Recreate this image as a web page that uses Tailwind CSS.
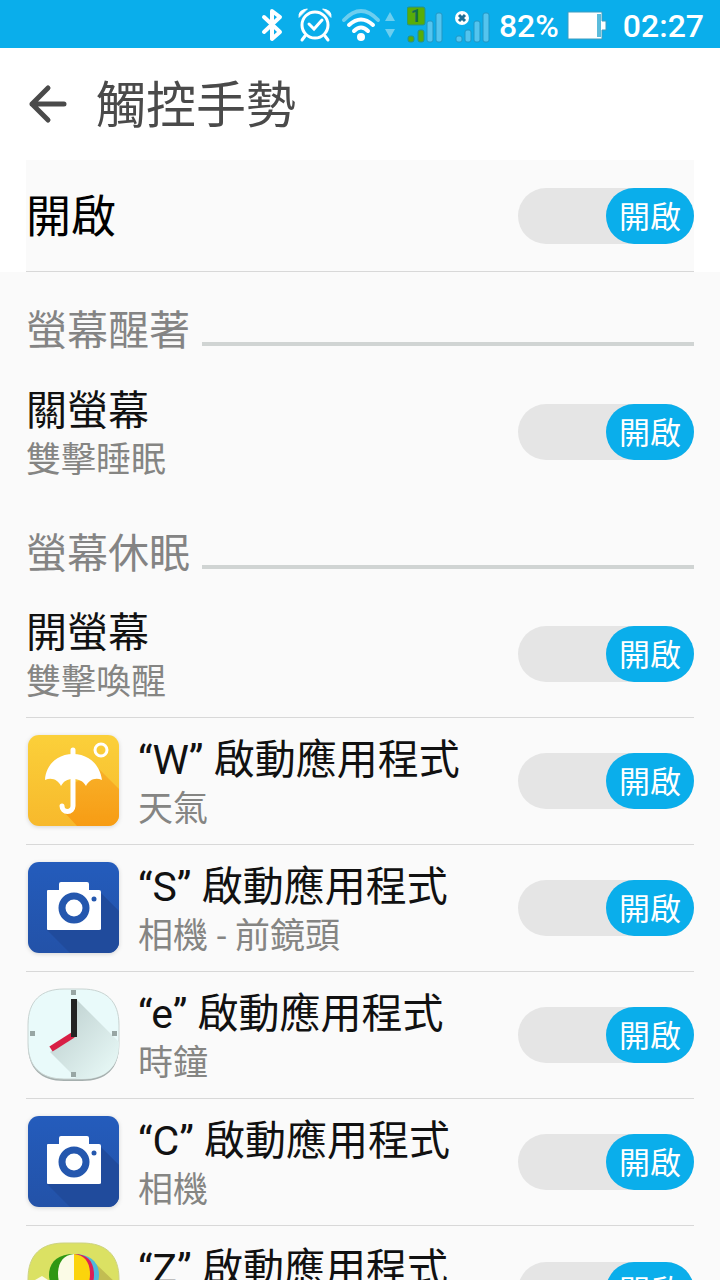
<!DOCTYPE html>
<html lang="zh-Hant">
  <head>
    <meta charset="UTF-8" />
    <meta name="viewport" content="width=device-width, initial-scale=1.0" />
    <title>觸控手勢</title>
    <script src="https://cdn.jsdelivr.net/npm/@tailwindcss/browser@4"></script>
  </head>

  <body
    class="h-screen overflow-hidden bg-[#fafafa] font-['Roboto','Noto_Sans_CJK_TC',sans-serif] text-[#111]"
  >
    <!-- ============ STATUS BAR ============ -->
    <div class="flex h-12 items-center justify-end bg-[#0aaeeb] pr-4 text-white">
      <!-- bluetooth -->
      <svg class="h-12 w-6" viewBox="0 0 24 48" fill="none" stroke="currentColor" stroke-width="4" stroke-linejoin="round" stroke-linecap="round" aria-hidden="true">
        <path d="M3 17l16 15-8 7V11l8 6L3 32" />
      </svg>
      <!-- alarm -->
      <svg class="ml-3 h-12 w-9" viewBox="0 0 36 48" fill="none" stroke="currentColor" stroke-width="3" stroke-linecap="round" aria-hidden="true">
        <circle cx="18" cy="25" r="13" />
        <path d="M12 24l5 5 8-9M8 36l-3 4M28 36l3 4" />
        <path d="M2 17q-1-7 8-8zM34 17q1-7-8-8z" fill="currentColor" stroke="currentColor" stroke-width="1" />
      </svg>
      <!-- wifi -->
      <svg class="ml-2 h-12 w-14" viewBox="0 0 56 48" fill="none" aria-hidden="true">
        <path d="M3 20q17-18 34 0" stroke="#6dceef" stroke-width="4" stroke-linecap="round" />
        <path d="M8 25q12-11 24 0M13 31q7-7 14 0" stroke="white" stroke-width="4" stroke-linecap="round" />
        <circle cx="20" cy="37" r="4" fill="white" />
        <path d="M44 21l5-9 5 9zM44 29l5 9 5-9z" fill="#6dceef" />
      </svg>
      <!-- SIM 1 signal -->
      <svg class="ml-[10px] h-12 w-9" viewBox="0 0 36 48" aria-hidden="true">
        <rect x="0" y="7" width="18" height="18" rx="2" fill="#58ad08" stroke="#258f93" />
        <text x="9" y="22" text-anchor="middle" font-size="18" font-weight="700" fill="#126c50">1</text>
        <rect x="1" y="36" width="6" height="6" rx="2" fill="#58ad08" stroke="#258f93" />
        <rect x="11" y="30" width="6" height="12" rx="2" fill="#58ad08" stroke="#258f93" />
        <rect x="20" y="21" width="6" height="21" rx="2" fill="#54c4ee" stroke="#2196c4" />
        <rect x="29" y="13" width="6" height="29" rx="2" fill="#54c4ee" stroke="#2196c4" />
      </svg>
      <!-- SIM 2 signal -->
      <svg class="ml-3 h-12 w-9" viewBox="0 0 36 48" aria-hidden="true">
        <g fill="#54c4ee" stroke="#2196c4">
          <rect x="1" y="36" width="6" height="6" rx="2" />
          <rect x="10" y="30" width="6" height="12" rx="2" />
          <rect x="19" y="21" width="6" height="21" rx="2" />
          <rect x="28" y="13" width="6" height="29" rx="2" />
        </g>
        <circle cx="7" cy="18" r="7" fill="white" />
        <path d="M4 15l6 6M10 15l-6 6" stroke="#1d6f96" stroke-width="3" />
      </svg>
      <span class="ml-2 pt-1 text-[32px] leading-12 font-medium">82%</span>
      <!-- battery -->
      <svg class="ml-2 h-12 w-10" viewBox="0 0 40 48" aria-hidden="true">
        <path d="M1 12h34v9h4v9h-4v9H1z" fill="white" stroke="#3c9cc0" />
        <rect x="30" y="14" width="4" height="23" fill="#5bbcdc" />
      </svg>
      <time class="ml-4 pt-1 text-[32px] leading-12 font-medium">02:27</time>
    </div>

    <!-- ============ HEADER ============ -->
    <header class="flex h-28 items-center gap-7 bg-white px-[26px] text-[#4a4a4a]">
      <button type="button" aria-label="返回">
        <svg class="h-12 w-[42px]" viewBox="0 0 42 48" fill="none" stroke="currentColor" stroke-width="5" stroke-linecap="round" stroke-linejoin="round">
          <path d="M38 24H6M22 8L6 24l16 16" />
        </svg>
      </button>
      <h1 class="pt-1 text-[50px] leading-none">觸控手勢</h1>
    </header>

    <!-- master switch -->
    <div class="bg-white px-[26px]">
      <div class="flex h-28 items-center justify-between border-b border-[#d8d8d8] bg-[#fafafa]">
        <span class="pt-1 text-[45px] leading-none text-black">開啟</span>
        <label class="relative h-14 w-44 shrink-0">
          <input type="checkbox" role="switch" checked aria-label="開啟觸控手勢" class="block h-14 w-44 appearance-none rounded-full bg-[#e5e5e5]" />
          <span class="absolute inset-y-0 right-0 w-22 rounded-full bg-[#0aaeeb] text-center text-[31px] leading-15 text-white">開啟</span>
        </label>
      </div>
    </div>

    <main class="px-[26px]">
      <!-- ============ SCREEN AWAKE ============ -->
      <h2 class="flex h-24 items-end gap-3 pb-4 text-[41px] leading-none text-[#848484]">
        <span>螢幕醒著</span>
        <span class="mb-[6px] h-1 flex-1 bg-[#d0d4d3]"></span>
      </h2>

      <div class="flex h-[127px] items-center justify-between">
        <div class="pt-2">
          <h3 class="text-[41px] leading-[50px]">關螢幕</h3>
          <p class="text-[35px] leading-[50px] text-[#858583]">雙擊睡眠</p>
        </div>
        <label class="relative h-14 w-44 shrink-0">
          <input type="checkbox" role="switch" checked aria-label="關螢幕" class="block h-14 w-44 appearance-none rounded-full bg-[#e5e5e5]" />
          <span class="absolute inset-y-0 right-0 w-22 rounded-full bg-[#0aaeeb] text-center text-[31px] leading-15 text-white">開啟</span>
        </label>
      </div>

      <!-- ============ SCREEN ASLEEP ============ -->
      <h2 class="flex h-24 items-end gap-3 pb-4 text-[41px] leading-none text-[#848484]">
        <span>螢幕休眠</span>
        <span class="mb-[6px] h-1 flex-1 bg-[#d0d4d3]"></span>
      </h2>

      <ul class="divide-y divide-[#d8d8d8]">
        <li class="flex h-[127px] items-center justify-between">
          <div class="pt-2">
            <h3 class="text-[41px] leading-[50px]">開螢幕</h3>
            <p class="text-[35px] leading-[50px] text-[#858583]">雙擊喚醒</p>
          </div>
          <label class="relative h-14 w-44 shrink-0">
            <input type="checkbox" role="switch" checked aria-label="開螢幕" class="block h-14 w-44 appearance-none rounded-full bg-[#e5e5e5]" />
            <span class="absolute inset-y-0 right-0 w-22 rounded-full bg-[#0aaeeb] text-center text-[31px] leading-15 text-white">開啟</span>
          </label>
        </li>

        <!-- W: weather -->
        <li class="flex h-[127px] items-center gap-4">
          <svg class="size-24 shrink-0 drop-shadow-sm" viewBox="0 0 96 96" aria-hidden="true">
            <defs>
              <linearGradient id="sun" x1="0" y1="0" x2="0" y2="1">
                <stop offset="0" stop-color="#fbd03a" />
                <stop offset="1" stop-color="#f7b92c" />
              </linearGradient>
              <linearGradient id="sunShade" x1="0" y1="0" x2="0" y2="1">
                <stop offset="0" stop-color="#f8b028" />
                <stop offset="1" stop-color="#f79c14" />
              </linearGradient>
            </defs>
            <rect x="2" y="2" width="91" height="91" rx="11" fill="url(#sun)" />
            <path d="M73 36l20 20v26a11 11 0 0 1-11 11H51L39 80l8-2V50l13-5z" fill="url(#sunShade)" />
            <path d="M19 47C20 31 32 21 47 21s27 10 29 26c-7-3-13 0-16 6-3-5-7-7-13-7s-9 2-12 7c-3-6-9-9-16-6z" fill="white" />
            <path d="M47 24v-7M47 46v27a5.500 5.500 0 0 1-11 0" fill="none" stroke="white" stroke-width="5" stroke-linecap="round" />
            <circle cx="75" cy="17" r="6" fill="none" stroke="white" stroke-width="3" />
          </svg>
          <div class="flex-1 pt-2">
            <h3 class="text-[41px] leading-[50px]">“W” 啟動應用程式</h3>
            <p class="text-[35px] leading-[50px] text-[#858583]">天氣</p>
          </div>
          <label class="relative h-14 w-44 shrink-0">
            <input type="checkbox" role="switch" checked aria-label="W 啟動應用程式" class="block h-14 w-44 appearance-none rounded-full bg-[#e5e5e5]" />
            <span class="absolute inset-y-0 right-0 w-22 rounded-full bg-[#0aaeeb] text-center text-[31px] leading-15 text-white">開啟</span>
          </label>
        </li>

        <!-- S: front camera -->
        <li class="flex h-[127px] items-center gap-4">
          <svg class="size-24 shrink-0 drop-shadow-sm" viewBox="0 0 96 96" aria-hidden="true">
            <defs>
              <linearGradient id="lens" x1="0" y1="0" x2="0" y2="1">
                <stop offset="0" stop-color="#245cbc" />
                <stop offset="1" stop-color="#2352a8" />
              </linearGradient>
            </defs>
            <g id="camera">
              <rect x="2" y="2" width="91" height="91" rx="11" fill="url(#lens)" />
              <path d="M74 32l19 19v31a11 11 0 0 1-11 11H44L21 70z" fill="#204b9c" />
              <path d="M22 30h11v-6q0-2 2-2h26q2 0 2 2v6h10q2 0 2 2v37q0 1-2 1H22q-1 0-1-1V31q0-1 1-1z" fill="white" />
              <circle cx="48" cy="48" r="12" fill="white" stroke="#2457ae" stroke-width="7" />
              <circle cx="68" cy="39" r="2.500" fill="#2457ae" />
            </g>
          </svg>
          <div class="flex-1 pt-2">
            <h3 class="text-[41px] leading-[50px]">“S” 啟動應用程式</h3>
            <p class="text-[35px] leading-[50px] text-[#858583]">相機 - 前鏡頭</p>
          </div>
          <label class="relative h-14 w-44 shrink-0">
            <input type="checkbox" role="switch" checked aria-label="S 啟動應用程式" class="block h-14 w-44 appearance-none rounded-full bg-[#e5e5e5]" />
            <span class="absolute inset-y-0 right-0 w-22 rounded-full bg-[#0aaeeb] text-center text-[31px] leading-15 text-white">開啟</span>
          </label>
        </li>

        <!-- e: clock -->
        <li class="flex h-[127px] items-center gap-4">
          <svg class="size-24 shrink-0" viewBox="0 0 96 96" aria-hidden="true">
            <defs>
              <linearGradient id="clockShade" x1="0" y1="0" x2="1" y2="1">
                <stop offset="0.200" stop-color="#c3d5d4" />
                <stop offset="0.900" stop-color="#e6f7f5" />
              </linearGradient>
            </defs>
            <path d="M38 4h18c24 0 37 12 37 36v18c0 24-13 36-37 36H38C15 94 2 82 2 58V40C2 16 15 4 38 4z" fill="#a5afae" />
            <path d="M38 2h18c24 0 37 12 37 36v18c0 24-13 36-37 36H38C15 92 2 80 2 56V38C2 14 15 2 38 2z" fill="#e9fafa" stroke="#c9d4d2" />
            <path d="M51 13l42 42v1c0 24-13 36-37 36h-5L24 65l24-16z" fill="url(#clockShade)" />
            <path d="M45 3h5v5h-5zM45 85h5v5h-5zM4 44h5v5H4zM86 44h5v5h-5z" fill="#98a6a4" />
            <path d="M47 48L25 62" stroke="#d81f45" stroke-width="6" />
            <path d="M48 12v38" stroke="#232323" stroke-width="6" />
          </svg>
          <div class="flex-1 pt-2">
            <h3 class="text-[41px] leading-[50px]">“e” 啟動應用程式</h3>
            <p class="text-[35px] leading-[50px] text-[#858583]">時鐘</p>
          </div>
          <label class="relative h-14 w-44 shrink-0">
            <input type="checkbox" role="switch" checked aria-label="e 啟動應用程式" class="block h-14 w-44 appearance-none rounded-full bg-[#e5e5e5]" />
            <span class="absolute inset-y-0 right-0 w-22 rounded-full bg-[#0aaeeb] text-center text-[31px] leading-15 text-white">開啟</span>
          </label>
        </li>

        <!-- C: camera -->
        <li class="flex h-[127px] items-center gap-4">
          <svg class="size-24 shrink-0 drop-shadow-sm" viewBox="0 0 96 96" aria-hidden="true">
            <use href="#camera" />
          </svg>
          <div class="flex-1 pt-2">
            <h3 class="text-[41px] leading-[50px]">“C” 啟動應用程式</h3>
            <p class="text-[35px] leading-[50px] text-[#858583]">相機</p>
          </div>
          <label class="relative h-14 w-44 shrink-0">
            <input type="checkbox" role="switch" checked aria-label="C 啟動應用程式" class="block h-14 w-44 appearance-none rounded-full bg-[#e5e5e5]" />
            <span class="absolute inset-y-0 right-0 w-22 rounded-full bg-[#0aaeeb] text-center text-[31px] leading-15 text-white">開啟</span>
          </label>
        </li>

        <!-- Z: gallery -->
        <li class="flex h-[127px] items-center gap-4">
          <svg class="size-24 shrink-0" viewBox="0 0 96 96" aria-hidden="true">
            <path d="M38 1h18c24 0 37 12 37 36v18c0 24-13 37-37 37H38C15 92 2 79 2 55V37C2 13 15 1 38 1z" fill="#dbe163" stroke="#cdd382" />
            <path d="M70 22l23 22v11c0 24-13 37-37 37h-6L38 60z" fill="#c2bd52" />
            <path d="M2 42l14-8 12 8v16H2z" fill="#fbfbe6" />
            <path d="M48 12c-16 0-25 8-25 21s12 22 25 31z" fill="#2f9714" />
            <path d="M48 12c16 0 25 8 25 21s-12 22-25 31z" fill="#4fb8dc" />
            <path d="M48 12c14 0 20 8 20 21s-9 22-20 31z" fill="#dc1f56" />
            <path d="M48 12c-11 1-16 9-16 20s6 23 16 32z" fill="#fbfbe6" />
            <path d="M48 12c11 1 16 9 16 20s-6 23-16 32z" fill="#fbd40c" />
          </svg>
          <div class="flex-1 pt-2">
            <h3 class="text-[41px] leading-[50px]">“Z” 啟動應用程式</h3>
            <p class="text-[35px] leading-[50px] text-[#858583]">圖片庫</p>
          </div>
          <label class="relative h-14 w-44 shrink-0">
            <input type="checkbox" role="switch" checked aria-label="Z 啟動應用程式" class="block h-14 w-44 appearance-none rounded-full bg-[#e5e5e5]" />
            <span class="absolute inset-y-0 right-0 w-22 rounded-full bg-[#0aaeeb] text-center text-[31px] leading-15 text-white">開啟</span>
          </label>
        </li>
      </ul>
    </main>
  </body>
</html>
